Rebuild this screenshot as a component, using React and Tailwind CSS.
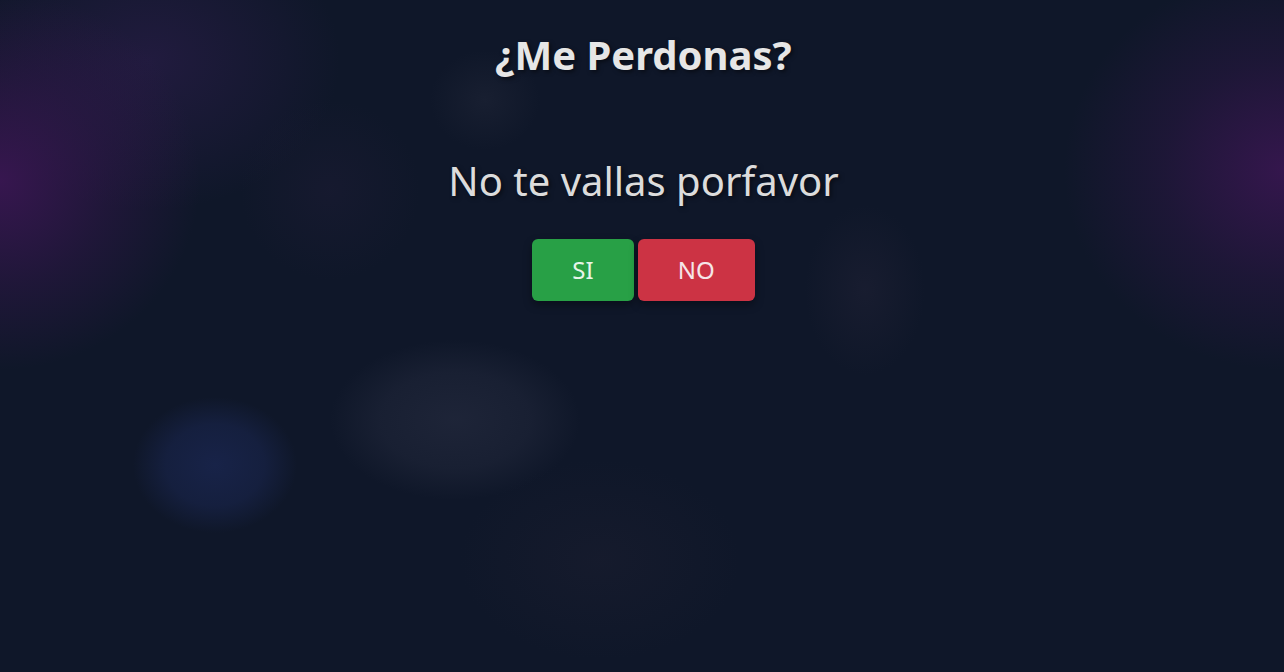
export default function App() {
  return (
    <div className="w-full h-[672px] overflow-hidden bg-[#0f1729] bg-[radial-gradient(200px_190px_at_0px_180px,rgba(62,22,86,0.85),rgba(62,22,86,0.35)_55%,transparent),radial-gradient(220px_200px_at_1284px_170px,rgba(62,22,86,0.8),rgba(62,22,86,0.3)_55%,transparent),radial-gradient(190px_150px_at_150px_60px,rgba(48,30,80,0.55),transparent),radial-gradient(82px_68px_at_215px_465px,rgba(26,38,80,0.8),rgba(26,38,80,0.55)_60%,transparent),radial-gradient(125px_80px_at_455px_420px,rgba(36,42,62,0.7),rgba(36,42,62,0.45)_60%,transparent),radial-gradient(55px_50px_at_485px_100px,rgba(30,36,54,0.6),transparent),radial-gradient(60px_85px_at_865px_290px,rgba(30,32,52,0.6),transparent),radial-gradient(140px_100px_at_600px_560px,rgba(24,28,46,0.7),transparent),radial-gradient(90px_90px_at_330px_190px,rgba(30,28,54,0.45),transparent)] font-['Noto_Sans','Open_Sans',sans-serif]">
      <div className="flex flex-col items-center pt-[31px] pl-[3px]">
        <h1 className="text-[40px] leading-[1.2] font-bold text-[#e6e6e6] [text-shadow:2px_2px_4px_rgba(0,0,0,0.5)]">
          ¿Me Perdonas?
        </h1>
        <p className="mt-[78px] text-[40px] leading-[1.2] text-[#dcdcdc] [text-shadow:2px_2px_4px_rgba(0,0,0,0.5)]">
          No te vallas porfavor
        </p>
        <div className="mt-[34px] flex gap-1">
          <button className="h-[62px] px-10 rounded-md bg-[#28a046] text-[24px] text-[#e8f5ea] shadow-[0_4px_8px_rgba(0,0,0,0.35)]">
            SI
          </button>
          <button className="h-[62px] px-10 rounded-md bg-[#cc3344] text-[24px] text-[#f5e6e8] shadow-[0_4px_8px_rgba(0,0,0,0.35)]">
            NO
          </button>
        </div>
      </div>
    </div>
  );
}
